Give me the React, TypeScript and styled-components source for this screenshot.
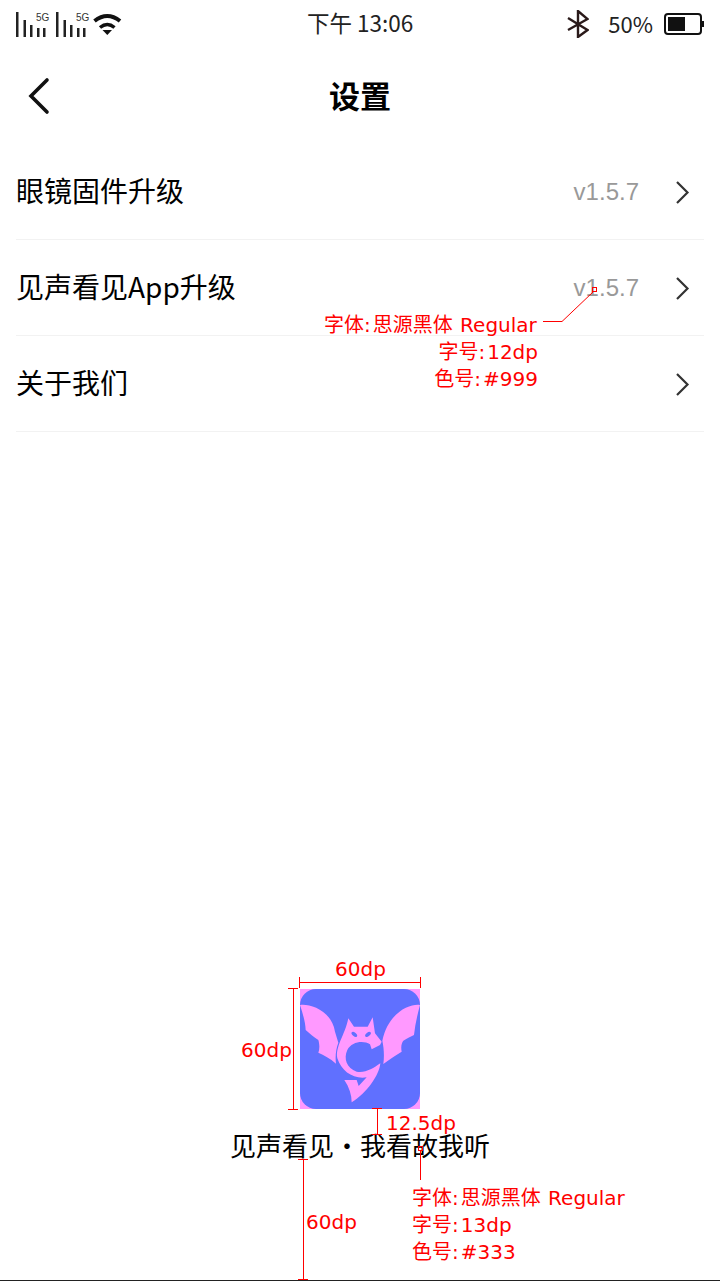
import React from 'react';
import styled, { createGlobalStyle } from 'styled-components';

const CJK = `'Noto Sans CJK SC', 'Noto Sans', sans-serif`;
const ANNOTATION_RED = '#ff0000';

const GlobalStyle = createGlobalStyle`
  html, body {
    margin: 0;
    padding: 0;
    background: #fff;
  }
`;

const Page = styled.div`
  position: relative;
  display: flex;
  flex-direction: column;
  width: 720px;
  height: 1281px;
  overflow: hidden;
  background: #fff;
  box-sizing: border-box;
  border-bottom: 1px solid #222;
  font-family: ${CJK};
`;

const StatusBar = styled.div`
  display: flex;
  align-items: center;
  justify-content: space-between;
  height: 48px;
  padding: 0 16px;
  color: #111;
`;

const StatusGroup = styled.div`
  display: flex;
  align-items: center;
  flex: 1;
`;

const StatusRight = styled(StatusGroup)`
  justify-content: flex-end;
`;

const StatusTime = styled.div`
  font-size: 22.5px;
  line-height: 44px;
  padding-bottom: 4px;
  color: #222;
`;

const Battery = styled.span`
  font-size: 22px;
  line-height: 30px;
  padding-bottom: 2px;
  color: #222;
  margin: 0 11px 0 19px;
`;

const NavBar = styled.div`
  position: relative;
  display: flex;
  align-items: center;
  justify-content: center;
  height: 96px;
`;

const BackIcon = styled.svg`
  position: absolute;
  left: 26px;
  top: 27px;
`;

const Title = styled.h1`
  margin: 0 0 4px;
  font-size: 31px;
  font-weight: 700;
  color: #000;
`;

const List = styled.div`
  display: flex;
  flex-direction: column;
  padding: 0 16px;
`;

const Row = styled.div`
  display: flex;
  align-items: center;
  height: 96px;
  padding-right: 12px;
  box-sizing: border-box;
  border-bottom: 1px solid #f2f2f2;
`;

const RowLabel = styled.span`
  flex: 1;
  padding-bottom: 4px;
  font-size: 28px;
  color: #000;
`;

const RowVersion = styled.span`
  font-family: 'Liberation Sans', sans-serif;
  font-size: 24px;
  color: #999;
  margin-right: 35px;
`;

const Footer = styled.div`
  display: flex;
  flex-direction: column;
  align-items: center;
  margin-top: auto;
  padding-bottom: 123px;
`;

const LogoFrame = styled.svg`
  display: block;
`;

const Slogan = styled.div`
  margin-top: 24px;
  font-size: 26px;
  line-height: 24px;
  color: #000;
`;

const Note = styled.div<{ $x?: number; $right?: number; $y: number }>`
  position: absolute;
  top: ${({ $y }) => $y}px;
  ${({ $x }) => ($x !== undefined ? `left: ${$x}px;` : '')}
  ${({ $right }) => ($right !== undefined ? `right: ${$right}px; text-align: right;` : '')}
  font-family: 'DejaVu Sans', ${CJK};
  font-size: 20px;
  line-height: 27px;
  word-spacing: 1px;
  color: ${ANNOTATION_RED};
  white-space: nowrap;
`;

const DimLabel = styled(Note)`
  line-height: 18px;
`;

const Colon = styled.span`
  margin-right: 2px;
`;

const Overlay = styled.svg`
  position: absolute;
  left: 0;
  top: 0;
  pointer-events: none;
`;

const Signal = ({ x }: { x: number }) => (
  <g fill="#222">
    <rect x={x} y={12} width={2.5} height={25} />
    <rect x={x + 7.5} y={20} width={2.5} height={17} />
    <rect x={x + 14} y={25} width={2.5} height={12} />
    <rect x={x + 21} y={28} width={2.5} height={9} />
    <rect x={x + 27} y={28} width={2.5} height={9} />
    <text x={x + 20} y={21} fontSize="10" fontFamily="'Liberation Sans', sans-serif" fill="#333">5G</text>
  </g>
);

const Chevron = () => (
  <svg width="18" height="24" viewBox="0 0 18 24" fill="none" stroke="#333" strokeWidth="2.2">
    <path d="M3 2 L13.5 12.5 L3 23" />
  </svg>
);

const Logo = () => (
  <LogoFrame width="120" height="120" viewBox="0 0 360 360">
    <rect width="360" height="360" fill="#ff99ff" />
    <rect width="360" height="360" rx="48" fill="#6070ff" />
    <g fill="#ff99ff" transform="translate(0 33)">
      <path d="M0 15 C27 10 95 30 105 95 L115 128 C108 145 105 170 108 191 C90 175 72 165 55 158 C60 145 58 130 55 120 C42 112 28 100 17 90 C16 65 8 40 0 15Z" />
      <path d="M360 15 C333 10 265 35 247 122 C252 145 253 170 250 192 C268 178 288 165 305 155 C302 140 305 128 310 122 C322 115 332 110 342 105 C345 75 352 45 360 15Z" />
      <path d="M145 55 L162 80 H203 L218 52 L225 100 L245 125 L240 135 L215 148 L210 133 C190 120 155 125 142 150 C130 175 140 205 170 215 C195 220 220 205 241 190 C238 225 200 280 155 307 C155 285 148 262 133 240 L170 240 L176 258 L200 232 C160 238 125 215 112 175 C105 140 135 105 145 55Z" />
    </g>
    <ellipse cx="163" cy="136" rx="10" ry="5.5" transform="rotate(40 163 136)" fill="#6070ff" />
    <ellipse cx="204" cy="136" rx="10" ry="5.5" transform="rotate(-40 204 136)" fill="#6070ff" />
  </LogoFrame>
);

const App: React.FC = () => (
  <Page>
    <GlobalStyle />
    <StatusBar>
      <StatusGroup>
        <svg width="108" height="48" viewBox="16 0 108 48">
          <Signal x={16} />
          <Signal x={56} />
          <path d="M94.5 21 Q107.3 11 120 21" fill="none" stroke="#111" strokeWidth="4" />
          <path d="M100 27.5 Q107.3 21.5 114.5 27.5" fill="none" stroke="#111" strokeWidth="3.5" />
          <path d="M102.5 30 H112 L107.3 35Z" fill="#111" />
        </svg>
      </StatusGroup>
      <StatusTime>下午 13:06</StatusTime>
      <StatusRight>
        <svg width="22" height="28" viewBox="0 0 22 28" fill="none" stroke="#2a1a1a" strokeWidth="2.4">
          <path d="M1 8 L20.5 20 L11 27 V1 L20.5 9 L1 20" />
        </svg>
        <Battery>50%</Battery>
        <svg width="40" height="22" viewBox="0 0 40 22">
          <rect x="1" y="1" width="36" height="20" rx="3" fill="none" stroke="#111" strokeWidth="2" />
          <rect x="4" y="4" width="17" height="14" fill="#111" />
          <rect x="38" y="8" width="2" height="6" fill="#111" />
        </svg>
      </StatusRight>
    </StatusBar>

    <NavBar>
      <BackIcon width="26" height="42" viewBox="0 0 26 42" fill="none" stroke="#111" strokeWidth="3.6" strokeLinecap="round">
        <path d="M21 5 L5 21 L21 37" />
      </BackIcon>
      <Title>设置</Title>
    </NavBar>

    <List>
      <Row>
        <RowLabel>眼镜固件升级</RowLabel>
        <RowVersion>v1.5.7</RowVersion>
        <Chevron />
      </Row>
      <Row>
        <RowLabel>见声看见App升级</RowLabel>
        <RowVersion>v1.5.7</RowVersion>
        <Chevron />
      </Row>
      <Row>
        <RowLabel>关于我们</RowLabel>
        <Chevron />
      </Row>
    </List>

    <Footer>
      <Logo />
      <Slogan>见声看见・我看故我听</Slogan>
    </Footer>

    <Overlay width="720" height="1281" fill="none" stroke={ANNOTATION_RED} strokeWidth="1">
      <path d="M543 321.5 H562 L593 292" />
      <rect x="592.5" y="287.5" width="4" height="4" />
      <path d="M299.5 977 V988 M420.5 977 V988 M300 982.5 H420" />
      <path d="M288 988.5 H298 M288 1109.5 H298 M293.5 989 V1109" />
      <path d="M372 1108.5 H382 M377.5 1109 V1134 M372 1134.5 H382" />
      <path d="M420.5 1151 V1180" />
      <rect x="418.5" y="1146.5" width="4" height="4" />
      <path d="M298 1159.5 H308 M303.5 1160 V1280 M298 1279.5 H308" />
    </Overlay>

    <Note $x={324} $y={312}>字体<Colon>:</Colon>思源黑体 Regular</Note>
    <Note $right={182} $y={339}>字号<Colon>:</Colon>12dp<br />色号<Colon>:</Colon>#999</Note>
    <DimLabel $x={335} $y={960}>60dp</DimLabel>
    <DimLabel $x={241} $y={1041}>60dp</DimLabel>
    <DimLabel $x={386} $y={1114}>12.5dp</DimLabel>
    <DimLabel $x={306} $y={1213}>60dp</DimLabel>
    <Note $x={412} $y={1185}>字体<Colon>:</Colon>思源黑体 Regular<br />字号<Colon>:</Colon>13dp<br />色号<Colon>:</Colon>#333</Note>
  </Page>
);

export default App;
